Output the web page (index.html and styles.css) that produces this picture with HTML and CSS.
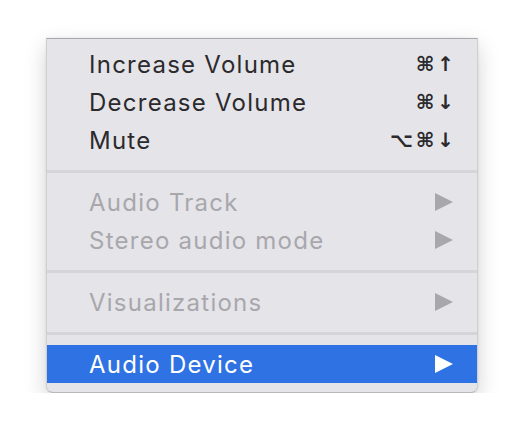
FILE: index.html
```html
<!DOCTYPE html>
<html>
<head>
<meta charset="utf-8">
<link rel="stylesheet" href="styles.css">
</head>
<body>
<div class="stage">
  <div class="menu">
    <div class="item"><span class="label">Increase Volume</span><span class="key">⌘↑</span></div>
    <div class="item"><span class="label">Decrease Volume</span><span class="key">⌘↓</span></div>
    <div class="item"><span class="label">Mute</span><span class="key">⌥⌘↓</span></div>
    <div class="sep"></div>
    <div class="item disabled"><span class="label">Audio Track</span><span class="arrow"></span></div>
    <div class="item disabled"><span class="label">Stereo audio mode</span><span class="arrow"></span></div>
    <div class="sep"></div>
    <div class="item disabled"><span class="label">Visualizations</span><span class="arrow"></span></div>
    <div class="sep"></div>
    <div class="item active"><span class="label">Audio Device</span><span class="arrow"></span></div>
  </div>
</div>
</body>
</html>
```
FILE: styles.css
```css
html, body {
  margin: 0;
  padding: 0;
  background: #ffffff;
}
.stage {
  padding: 38px 0 0 46px;
}
.menu {
  width: 432px;
  box-sizing: border-box;
  background: #e5e4e9;
  border-top: 1px solid #a9a9ab;
  border-left: 1px solid #cfcfd1;
  border-right: 1px solid #cfcfd1;
  border-bottom: 1px solid #b8b8ba;
  border-radius: 0 0 7px 7px;
  padding: 6px 0 9px;
  box-shadow: 0 8px 22px rgba(0,0,0,0.18), 0 0 3px rgba(0,0,0,0.08);
  font-family: "Inter", "Liberation Sans", sans-serif;
  font-size: 24px;
  color: #2b2a2d;
}
.item {
  height: 38px;
  display: flex;
  align-items: center;
  justify-content: space-between;
  padding: 0 23px 0 42px;
}
.label {
  letter-spacing: 1.25px;
}
.key {
  font-family: "DejaVu Sans", sans-serif;
  font-weight: bold;
  font-size: 20px;
  letter-spacing: 3px;
  margin-right: -3px;
  color: #2b2a2d;
}
.disabled {
  color: #a8a7ac;
}
.arrow {
  width: 0;
  height: 0;
  border-top: 9.5px solid transparent;
  border-bottom: 9.5px solid transparent;
  border-left: 18px solid #a8a7ac;
  margin-right: 1px;
}
.active {
  background: #2f72e3;
  color: #ffffff;
}
.active .arrow {
  border-left-color: #ffffff;
}
.sep {
  height: 3px;
  background: #d5d4d9;
  margin: 11px 0 10px;
}
```
